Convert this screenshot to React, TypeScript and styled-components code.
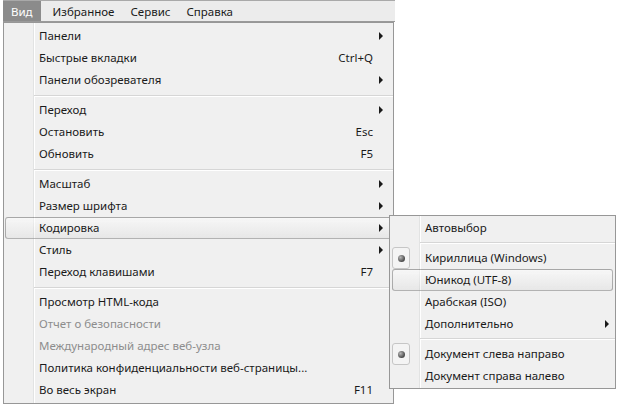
import styled, { createGlobalStyle } from "styled-components";

type Item =
  | { sep: true }
  | {
      sep?: false;
      label: string;
      key?: string;
      sub?: boolean;
      disabled?: boolean;
      active?: boolean;
      checked?: boolean;
    };

const mainItems: Item[] = [
  { label: "Панели", sub: true },
  { label: "Быстрые вкладки", key: "Ctrl+Q" },
  { label: "Панели обозревателя", sub: true },
  { sep: true },
  { label: "Переход", sub: true },
  { label: "Остановить", key: "Esc" },
  { label: "Обновить", key: "F5" },
  { sep: true },
  { label: "Масштаб", sub: true },
  { label: "Размер шрифта", sub: true },
  { label: "Кодировка", sub: true, active: true },
  { label: "Стиль", sub: true },
  { label: "Переход клавишами", key: "F7" },
  { sep: true },
  { label: "Просмотр HTML-кода" },
  { label: "Отчет о безопасности", disabled: true },
  { label: "Международный адрес веб-узла", disabled: true },
  { label: "Политика конфиденциальности веб-страницы..." },
  { label: "Во весь экран", key: "F11" },
];

const encodingItems: Item[] = [
  { label: "Автовыбор" },
  { sep: true },
  { label: "Кириллица (Windows)", checked: true },
  { label: "Юникод (UTF-8)", active: true },
  { label: "Арабская (ISO)" },
  { label: "Дополнительно", sub: true },
  { sep: true },
  { label: "Документ слева направо", checked: true },
  { label: "Документ справа налево" },
];

const menuBar = ["Вид", "Избранное", "Сервис", "Справка"];

const MenuList = ({ items, sub }: { items: Item[]; sub?: boolean }) => (
  <>
    {items.map((it, i) =>
      it.sep ? (
        <Separator key={i} $sub={sub} />
      ) : (
        <Row key={i} $active={it.active} $disabled={it.disabled} $sub={sub}>
          <Gutter>
            {it.checked && (
              <RadioBox>
                <Dot />
              </RadioBox>
            )}
          </Gutter>
          <Label>{it.label}</Label>
          <Shortcut>{it.key}</Shortcut>
          <ArrowCell $sub={sub}>{it.sub && <Arrow />}</ArrowCell>
        </Row>
      )
    )}
  </>
);

const App = () => {
  return (
    <Page>
      <GlobalStyle />
      <Bar>
        {menuBar.map((m, i) => (
          <BarItem key={m} $open={i === 0}>
            {m}
          </BarItem>
        ))}
      </Bar>
      <Dropdown>
        <MenuList items={mainItems} />
      </Dropdown>
      <SubMenu>
        <MenuList items={encodingItems} sub />
      </SubMenu>
    </Page>
  );
};

export default App;

const GlobalStyle = createGlobalStyle`
  body {
    margin: 0;
    background: #fff;
    font-family: "Noto Sans", "Segoe UI", Arial, sans-serif;
    font-size: 11.5px;
    color: #1a1a1a;
  }
`;

const Page = styled.div`
  position: relative;
  width: 618px;
  height: 407px;
  overflow: hidden;
`;

const Bar = styled.div`
  display: flex;
  margin-left: 3px;
  width: 392px;
  height: 20px;
  background: #ececec;
  border-top: 1px solid #a9a9a9;
  border-bottom: 1px solid #9a9a9a;
`;

const BarItem = styled.div<{ $open?: boolean }>`
  display: flex;
  align-items: center;
  padding: 0 8px;
  margin-right: ${(p) => (p.$open ? "4px" : "0")};
  background: ${(p) => (p.$open ? "#8b8b8b" : "transparent")};
  color: ${(p) => (p.$open ? "#fff" : "#1a1a1a")};
`;

const menuBackground = `
  background: linear-gradient(
      to right,
      transparent 29px,
      #e2e3e3 29px,
      #e2e3e3 30px,
      #ffffff 30px,
      #ffffff 31px,
      transparent 31px
    ),
    #f0f0f0;
  border: 1px solid #979797;
`;

const Dropdown = styled.div`
  margin-left: 3px;
  width: 389px;
  padding: 2px 0;
  ${menuBackground}
`;

const SubMenu = styled.div`
  position: absolute;
  left: 389px;
  top: 215px;
  width: 225px;
  padding: 1px 0;
  ${menuBackground}
`;

const Row = styled.div<{ $active?: boolean; $disabled?: boolean; $sub?: boolean }>`
  display: grid;
  grid-template-columns: ${(p) => (p.$sub ? "32px" : "33px")} 1fr auto 18px;
  align-items: center;
  box-sizing: border-box;
  height: 22px;
  margin: ${(p) => (p.$sub ? "0 2px" : "0 1px")};
  border: 1px solid ${(p) => (p.$active ? "rgba(0,0,0,0.28)" : "transparent")};
  border-radius: 3px;
  background: ${(p) =>
    p.$active
      ? "linear-gradient(to bottom, rgba(255,255,255,0.45), rgba(0,0,0,0.035))"
      : "transparent"};
  color: ${(p) => (p.$disabled ? "#8d8d8d" : "#1a1a1a")};
  white-space: nowrap;
`;

const Gutter = styled.div`
  align-self: stretch;
  position: relative;
  margin-left: -1px;
`;

const RadioBox = styled.div`
  position: absolute;
  left: 0;
  top: -1px;
  width: 16px;
  height: 20px;
  border: 1px solid #c6c6c6;
  border-radius: 3px;
  background: #f4f4f4;
  display: flex;
  align-items: center;
  justify-content: center;
`;

const Dot = styled.div`
  width: 7px;
  height: 7px;
  border-radius: 50%;
  background: radial-gradient(circle at 35% 35%, #b8b8b8, #4a4a4a 70%);
`;

const Label = styled.span`
  line-height: 20px;
`;

const Shortcut = styled.span`
  text-align: right;
  line-height: 20px;
`;

const ArrowCell = styled.div<{ $sub?: boolean }>`
  display: flex;
  align-items: center;
  padding-left: ${(p) => (p.$sub ? "11px" : "6px")};
`;

const Arrow = styled.div`
  width: 0;
  height: 0;
  border-top: 4px solid transparent;
  border-bottom: 4px solid transparent;
  border-left: 4px solid #1a1a1a;
`;

const Separator = styled.div<{ $sub?: boolean }>`
  height: 0;
  margin: ${(p) => (p.$sub ? "3px 0 3px 30px" : "4px 0 2px 30px")};
  border-top: 1px solid #d6d6d6;
  border-bottom: 1px solid #ffffff;
`;
